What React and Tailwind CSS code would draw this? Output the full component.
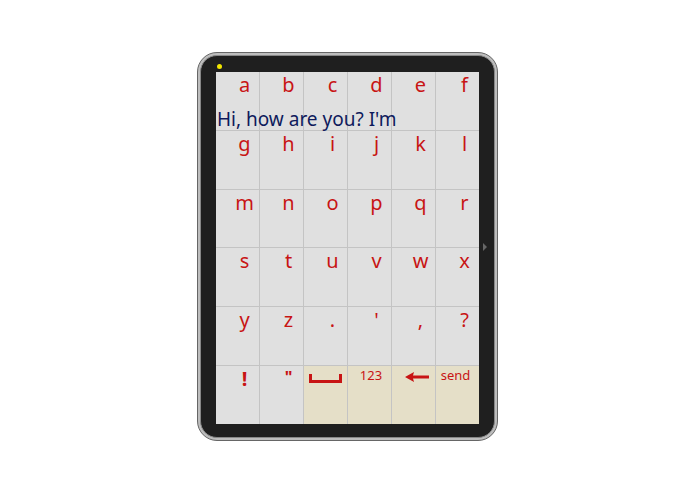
const rows = [
  ['a', 'b', 'c', 'd', 'e', 'f'],
  ['g', 'h', 'i', 'j', 'k', 'l'],
  ['m', 'n', 'o', 'p', 'q', 'r'],
  ['s', 't', 'u', 'v', 'w', 'x'],
  ['y', 'z', '.', "'", ',', '?'],
];

function Key({ children, special }) {
  return (
    <div className={`flex justify-center ${special ? 'bg-[#e5dfc8]' : 'bg-[#e0e0e0] pl-[14px]'}`}>
      {children}
    </div>
  );
}

export default function App() {
  return (
    <div className="w-[695px] h-[494px] bg-white flex items-start justify-center pt-[52px]" style={{ fontFamily: '"Noto Sans", sans-serif' }}>
      {/* tablet frame */}
      <div className="relative w-[301px] h-[389px] rounded-[20px] bg-[#bdbdbd] border border-[#666] p-[2px]">
        <div className="w-full h-full rounded-[17px] bg-[#1f1f1f] border border-[#888] pt-[16px] pl-[15px]">
          <div className="absolute left-[19px] top-[11px] w-[5px] h-[5px] rounded-full bg-[#f2e600]" />
          <div className="absolute right-[10px] top-[190px] w-0 h-0 border-y-[4px] border-y-transparent border-l-[4px] border-l-[#666]" />

          {/* screen */}
          <div className="relative w-[263px] h-[352px] bg-[#c4c4c4] grid grid-cols-6 grid-rows-6 gap-px overflow-hidden">
            {rows.flat().map((k, i) => (
              <Key key={i}>
                <span className="text-[20px] leading-none text-[#c81414] pt-[3px]">{k}</span>
              </Key>
            ))}
            <Key>
              <span className="text-[20px] leading-none text-[#c81414] font-bold pt-[3px]">!</span>
            </Key>
            <Key>
              <span className="text-[16px] leading-none text-[#c81414] font-bold pt-[3px]">"</span>
            </Key>
            <Key special>
              <div className="mt-[8px] -ml-[1px] w-[33px] h-[9px] border-[#c81414] border-x-[3px] border-b-[3px]" />
            </Key>
            <Key special>
              <span className="text-[13px] leading-none text-[#c81414] pt-[3px] ml-[3px]">123</span>
            </Key>
            <Key special>
              <svg width="24" height="10" viewBox="0 0 24 10" className="mt-[6px] ml-[6px]">
                <path d="M0 5 L9 0 L8 3.5 L24 3.5 L24 6.5 L8 6.5 L9 10 Z" fill="#c81414" />
              </svg>
            </Key>
            <Key special>
              <span className="text-[13px] leading-none text-[#c81414] pt-[3px] -ml-[4px]">send</span>
            </Key>

            <div className="absolute left-[1px] top-[38px] text-[19px] leading-none text-[#0e1a5c] whitespace-nowrap">
              Hi, how are you? I'm
            </div>
          </div>
        </div>
      </div>
    </div>
  );
}
